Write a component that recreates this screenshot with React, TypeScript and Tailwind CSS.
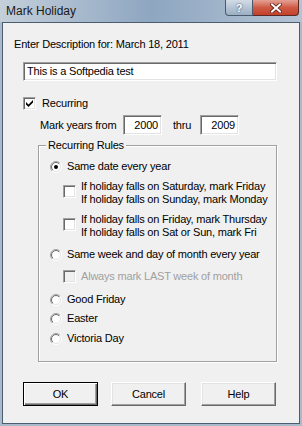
import React from "react";

function Check({ checked, disabled }: { checked?: boolean; disabled?: boolean }) {
  return (
    <div
      className={
        "w-[13px] h-[13px] shrink-0 border border-t-[#a0a0a0] border-l-[#a0a0a0] border-b-white border-r-white shadow-[inset_1px_1px_0_#696969,inset_-1px_-1px_0_#e3e3e3] flex items-center justify-center " +
        (disabled ? "bg-[#f0f0f0]" : "bg-white")
      }
    >
      {checked && (
        <svg width="7" height="7" viewBox="0 0 7 7">
          <path d="M0 2 L2.5 4.5 L7 0 L7 2.5 L2.5 7 L0 4.5 Z" fill="#000" />
        </svg>
      )}
    </div>
  );
}

function Radio({ checked }: { checked?: boolean }) {
  return (
    <svg width="12" height="12" viewBox="0 0 12 12" className="shrink-0">
      <defs>
        <linearGradient id="rOuter" x1="0" y1="0" x2="1" y2="1">
          <stop offset="0.5" stopColor="#a0a0a0" />
          <stop offset="0.5" stopColor="#ffffff" />
        </linearGradient>
        <linearGradient id="rInner" x1="0" y1="0" x2="1" y2="1">
          <stop offset="0.5" stopColor="#696969" />
          <stop offset="0.5" stopColor="#e3e3e3" />
        </linearGradient>
      </defs>
      <circle cx="6" cy="6" r="5.5" fill="none" stroke="url(#rOuter)" />
      <circle cx="6" cy="6" r="4.5" fill="#fff" stroke="url(#rInner)" />
      {checked && <circle cx="6" cy="6" r="2" fill="#000" />}
    </svg>
  );
}

function YearBox({ value }: { value: string }) {
  return (
    <div className="w-[39px] h-[20px] bg-white border border-t-[#a0a0a0] border-l-[#a0a0a0] border-b-white border-r-white shadow-[inset_1px_1px_0_#696969,inset_-1px_-1px_0_#e3e3e3] flex items-center justify-end pr-[3px]">
      {value}
    </div>
  );
}

function Btn({ label, def }: { label: string; def?: boolean }) {
  return (
    <div
      className={
        "w-[75px] h-[24px] flex items-center justify-center bg-[#f0f0f0] " +
        (def
          ? "border border-black shadow-[inset_1px_1px_0_#fff,inset_-1px_-1px_0_#696969,inset_-2px_-2px_0_#a0a0a0]"
          : "border border-t-white border-l-white border-b-[#696969] border-r-[#696969] shadow-[inset_-1px_-1px_0_#a0a0a0,inset_1px_1px_0_#e3e3e3]")
      }
    >
      {label}
    </div>
  );
}

export default function App() {
  return (
    <div className="w-[302px] h-[426px] flex flex-col overflow-hidden bg-[#a9bacb] font-['Liberation_Sans',Arial,sans-serif]">
      {/* Title bar */}
      <div className="h-[22px] shrink-0 flex items-start bg-gradient-to-r from-[#c4cfda] via-[#8ea6c1] to-[#b4c3d3]">
        <div className="flex-1 pl-[6px] pt-[3px] text-[12px] leading-[16px] text-[#1a1a1a]">Mark Holiday</div>
        <div className="w-[28px] h-[16px] rounded-bl-[4px] border border-t-0 border-[#4b5a6c] bg-gradient-to-b from-[#d3dce6] to-[#9aaec4] flex items-center justify-center">
          <span className="text-[11px] leading-[12px] font-bold text-white [text-shadow:0_0_2px_#2a3a50]">?</span>
        </div>
        <div className="w-[46px] h-[16px] mr-[3px] rounded-br-[4px] border border-t-0 border-l-0 border-[#5a2a22] bg-gradient-to-b from-[#e3a195] via-[#cf5a44] to-[#c4402a] flex items-center justify-center">
          <svg width="12" height="10" viewBox="0 0 12 10">
            <path d="M2 1.5 L10 8.5 M10 1.5 L2 8.5" stroke="#5a1f16" strokeWidth="3.6" strokeLinecap="square" />
            <path d="M2 1.5 L10 8.5 M10 1.5 L2 8.5" stroke="#ffffff" strokeWidth="2" strokeLinecap="square" />
          </svg>
        </div>
      </div>

      {/* Client */}
      <div className="ml-[2px] mr-[2px] mb-[2px] flex-1 border border-[#4d5d70] bg-[#f0f0f0] text-[11px] leading-[13px] tracking-[-0.2px] whitespace-nowrap text-black flex flex-col">
        <div className="mt-[15px] ml-[11px]">Enter Description for: March 18, 2011</div>
        <div className="mt-[11px] ml-[20px] w-[254px] h-[19px] bg-white border border-t-[#a0a0a0] border-l-[#a0a0a0] border-b-white border-r-white shadow-[inset_1px_1px_0_#696969,inset_-1px_-1px_0_#e3e3e3] flex items-center pl-[3px]">
          This is a Softpedia test
        </div>
        <div className="mt-[16px] ml-[20px] h-[13px] flex items-center">
          <Check checked />
          <span className="ml-[6px]">Recurring</span>
        </div>
        <div className="mt-[5px] ml-[37px] h-[20px] flex items-center">
          <span className="w-[83px]">Mark years from</span>
          <YearBox value="2000" />
          <span className="ml-[11px] w-[27px]">thru</span>
          <YearBox value="2009" />
        </div>

        <fieldset className="mt-[4px] ml-[35px] w-[239px] h-[223px] border border-[#a0a0a0] shadow-[inset_1px_1px_0_#fff,1px_1px_0_#fff] p-0 m-0">
          <legend className="ml-[7px] px-[2px] bg-[#f0f0f0]">Recurring Rules</legend>
          <div className="pl-[11px] pt-[8px] flex flex-col">
            <div className="h-[13px] flex items-center">
              <Radio checked />
              <span className="ml-[5px]">Same date every year</span>
            </div>
            <div className="mt-[7px] ml-[13px] flex items-start">
              <div className="mt-[5px]">
                <Check />
              </div>
              <div className="ml-[5px] flex flex-col">
                <span>If holiday falls on Saturday, mark Friday</span>
                <span>If holiday falls on Sunday, mark Monday</span>
              </div>
            </div>
            <div className="mt-[7px] ml-[13px] flex items-start">
              <div className="mt-[5px]">
                <Check />
              </div>
              <div className="ml-[5px] flex flex-col">
                <span>If holiday falls on Friday, mark Thursday</span>
                <span>If holiday falls on Sat or Sun, mark Fri</span>
              </div>
            </div>
            <div className="mt-[9px] h-[13px] flex items-center">
              <Radio />
              <span className="ml-[5px]">Same week and day of month every year</span>
            </div>
            <div className="mt-[9px] ml-[13px] h-[13px] flex items-center">
              <Check disabled />
              <span className="ml-[5px] text-[#a0a0a0]">Always mark LAST week of month</span>
            </div>
            <div className="mt-[10px] h-[13px] flex items-center">
              <Radio />
              <span className="ml-[5px]">Good Friday</span>
            </div>
            <div className="mt-[6px] h-[13px] flex items-center">
              <Radio />
              <span className="ml-[5px]">Easter</span>
            </div>
            <div className="mt-[7px] h-[13px] flex items-center">
              <Radio />
              <span className="ml-[5px]">Victoria Day</span>
            </div>
          </div>
        </fieldset>

        <div className="mt-[20px] ml-[20px] flex">
          <Btn label="OK" def />
          <div className="ml-[13px]">
            <Btn label="Cancel" />
          </div>
          <div className="ml-[15px]">
            <Btn label="Help" />
          </div>
        </div>
      </div>
    </div>
  );
}
